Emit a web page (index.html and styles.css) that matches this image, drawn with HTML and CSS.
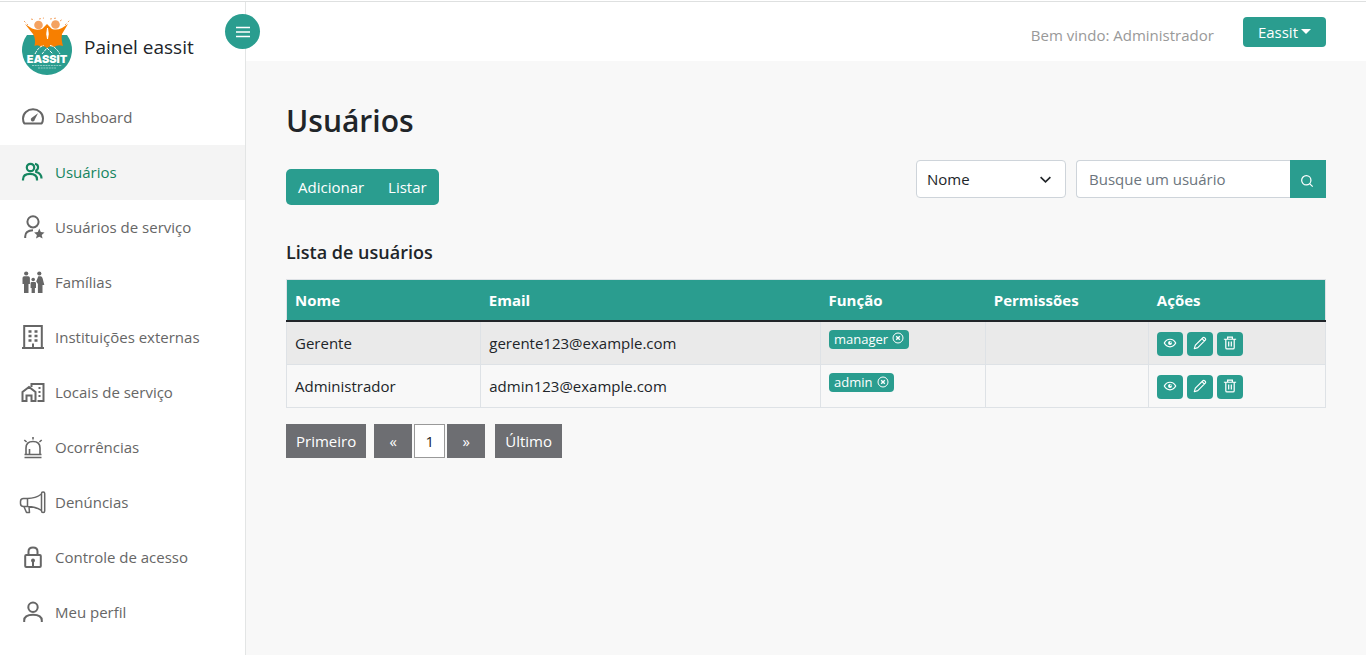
FILE: index.html
```html
<!DOCTYPE html>
<html lang="pt-BR">
<head>
<meta charset="utf-8">
<meta name="viewport" content="width=device-width, initial-scale=1">
<title>Painel eassit</title>
<link rel="stylesheet" href="styles.css">
</head>
<body>
<svg class="sprite" aria-hidden="true">
  <symbol id="eye" viewBox="0 0 16 16"><g fill="none" stroke="currentColor" stroke-width="1.4"><path d="M1.500 8C3 5 5.300 3.700 8 3.700S13 5 14.500 8C13 11 10.700 12.300 8 12.300S3 11 1.500 8Z"/></g><circle cx="8" cy="8" r="2.200" fill="currentColor"/><circle cx="8.900" cy="7.200" r=".8" fill="#2a9d8f"/></symbol>
  <symbol id="pencil" viewBox="0 0 16 16"><g fill="none" stroke="currentColor" stroke-width="1.300" stroke-linejoin="round"><path d="M1.500 14.500 2.700 10.500 11.300 2Q12.300 1 13.400 2.100L13.900 2.600Q15 3.700 14 4.700L5.500 13.300ZM10.300 3 13 5.700"/></g></symbol>
  <symbol id="trash" viewBox="0 0 16 16"><g fill="none" stroke="currentColor" stroke-width="1.400"><path d="M1 3.700H15M5.300 3.500V1.300H10.700V3.500M3.200 4V13.300Q3.200 14.700 4.600 14.700H11.400Q12.800 14.700 12.800 13.300V4M6.500 6.300V12M9.500 6.300V12"/></g></symbol>
  <symbol id="close" viewBox="0 0 12 12"><g fill="none" stroke="currentColor"><circle cx="6" cy="6" r="5"/><path d="M4.200 4.200 7.800 7.800M7.800 4.200 4.200 7.800" stroke-width="1.400"/></g></symbol>
</svg>
<div class="app">
  <aside class="sidebar">
    <div class="brand">
      <svg class="logo" viewBox="0 0 52 60" role="img" aria-label="Eassit">
        <path d="M6 18H46A25 25 0 1 1 6 18Z" fill="#2a9d8f"/>
        <path d="M4 7 11 11.500Q15 13.500 21 12L26 7 31 12Q36 13.500 41 11L47 7 41 17Q40 22 42 29Q37 27 33 30Q29 28 26 31Q23 28 20 30Q17 27 13.500 29Q15 22 12 17Z" fill="#f77f00"/>
        <circle cx="17.500" cy="8" r="4.300" fill="#f4a261"/><circle cx="34.500" cy="7.500" r="4.300" fill="#f4a261"/>
        <g fill="none" stroke="#fff" stroke-width="1"><path d="M26.500 11Q25 17 26.500 22Q28 17 26.500 11" fill="#fff"/><path d="M14 37Q18 29 23 28.500M21 37 26 31 32 37M29 28.500Q34 29 39 37" stroke-dasharray="3 1"/></g>
        <g fill="none" stroke="#f4a261" stroke-width="1" stroke-dasharray="2 2"><path d="M3 4 7 8M10 2 14 3M18 2 23 1M29 2 36 1M39 4 42 2M44 8 49 3"/></g>
        <text x="26" y="46" text-anchor="middle" class="logo-name">EASSIT</text>
        <path d="M11 48.500H41M17 51H35" stroke="#a9d7d0" stroke-width=".8" stroke-dasharray="2 .7"/>
      </svg>
      <span>Painel eassit</span>
      <button class="toggle" type="button" aria-label="Menu"><svg viewBox="0 0 14 12"><path d="M0 1.500H14M0 6H14M0 10.500H14" stroke="currentColor" stroke-width="1.500"/></svg></button>
    </div>
    <nav class="menu">
      <a href="#"><svg viewBox="0 0 24 24"><path d="M3.300 18.500Q2 16.500 2 13.500A10 9.200 0 0 1 22 13.500Q22 16.500 20.700 18.500Z" fill="none" stroke="currentColor" stroke-width="2" stroke-linejoin="round"/><path d="M17 8.300 13.800 14.400A2 2 0 1 1 10.800 12.700Z" fill="currentColor"/></svg>Dashboard</a>
      <a href="#" class="active"><svg viewBox="0 0 24 24"><g fill="none" stroke="currentColor" stroke-width="2.200"><circle cx="9.500" cy="7.500" r="3.700"/><path d="M2 20.500V19.500Q2 13.800 9 13.800T16 19.500V20.500M14 3.800Q17.500 4.500 17 8Q16.800 9.500 15.200 10.500V12Q20.500 13.500 20.500 18.500"/></g></svg>Usuários</a>
      <a href="#"><svg viewBox="0 0 24 24"><g fill="none" stroke="currentColor" stroke-width="2"><circle cx="12" cy="6.800" r="5.600"/><path d="M4.200 23V21.500Q4.200 15.500 12 15.300"/></g><path d="M18.300 13.500 19.800 17 23.500 17.400 20.700 19.900 21.600 23.600 18.300 21.700 15 23.600 15.900 19.900 13.100 17.400 16.800 17Z" fill="currentColor"/></svg>Usuários de serviço</a>
      <a href="#"><svg viewBox="0 0 24 24"><g fill="currentColor"><circle cx="5.200" cy="3.500" r="2.100"/><circle cx="18.300" cy="3.500" r="2.100"/><circle cx="12.200" cy="9.500" r="1.800"/><path d="M3.200 6.300H7.200Q8.900 6.300 8.900 8V14H7.500V23H3V14H1.500V8Q1.500 6.300 3.200 6.300ZM17.300 6.300H19.500Q21 6.300 21.500 8L23.300 15H21.500V23H16.900V14L15.200 11.500ZM10.700 12H13.700Q15 12 15 13V18H13.900V23H10.600V18H9.600V13Q9.600 12 10.700 12Z"/></g></svg>Famílias</a>
      <a href="#"><svg viewBox="0 0 24 24"><g fill="none" stroke="currentColor" stroke-width="2"><path d="M3.200 23V1H20.800V23M1 23H23M12 18.500V23"/><path d="M7.500 6.500H10.500M13.500 6.500H16.500M7.500 11H10.500M13.500 11H16.500M7.500 15.500H10.500M13.500 15.500H16.500" stroke-width="2.700"/></g></svg>Instituições externas</a>
      <a href="#"><svg viewBox="0 0 24 24"><g fill="none" stroke="currentColor" stroke-width="2"><path d="M1.500 21V12L8 7 14.500 12V21H10.500V15.500H5.500V21ZM10.500 7V4H22.500V21H16.500"/><path d="M18.500 7V9M18.500 11V13M18.500 15V17"/></g></svg>Locais de serviço</a>
      <a href="#"><svg viewBox="0 0 24 24"><g fill="none" stroke="currentColor" stroke-width="1.600"><path d="M5 19.200V13Q5 6.500 12 6.500T19 13V19.200M3.500 19.500H20.500M3.500 22.500H20.500M8.500 14V19M12 2V4.500M3.300 5 5.600 7M20.700 5 18.400 7"/></g></svg>Ocorrências</a>
      <a href="#"><svg viewBox="0 0 24 24" overflow="visible"><g fill="none" stroke="currentColor" stroke-width="1.500" stroke-linejoin="round"><rect x="20.500" y="2" width="3.200" height="20.500" rx="1.500"/><path d="M20.500 4Q14.500 8.500 6.500 8.500H2.500Q-.5 8.500-.5 11.500V13.500Q-.5 16.500 2.500 16.500H6.500Q14.500 16.500 20.500 20.500M6.500 8.500V16.500M3 16.700 5.500 22.500H8.500L8 17"/></g></svg>Denúncias</a>
      <a href="#"><svg viewBox="0 0 24 24"><g fill="none" stroke="currentColor" stroke-width="2"><rect x="4.200" y="10" width="15.600" height="12" rx="1"/><path d="M7.500 10V6.500Q7.500 2.500 12 2.500T16.500 6.500V10M12 16V21"/></g><circle cx="12" cy="15.500" r="2" fill="currentColor"/></svg>Controle de acesso</a>
      <a href="#"><svg viewBox="0 0 24 24"><g fill="none" stroke="currentColor" stroke-width="2"><circle cx="12" cy="7.200" r="4.700"/><path d="M3.200 22V20.500Q3.200 14.800 12 14.800T20.800 20.500V22"/></g></svg>Meu perfil</a>
    </nav>
  </aside>
  <div class="page">
    <header class="topbar">
      <span class="welcome">Bem vindo: Administrador</span>
      <button class="account" type="button">Eassit<span class="caret"></span></button>
    </header>
    <main class="content">
      <h1>Usuários</h1>
      <div class="toolbar">
        <div class="actions"><button type="button">Adicionar</button><button type="button">Listar</button></div>
        <form class="search">
          <div class="select-box">
            <select aria-label="Filtrar por"><option>Nome</option><option>Email</option></select>
            <svg viewBox="0 0 16 16"><path d="M2 5 8 11 14 5" fill="none" stroke="currentColor" stroke-width="2"/></svg>
          </div>
          <div class="search-box">
            <input type="text" placeholder="Busque um usuário" aria-label="Busque um usuário">
            <button type="button" aria-label="Buscar"><svg viewBox="0 0 16 16"><g fill="none" stroke="currentColor" stroke-width="1.400"><circle cx="7.200" cy="7.200" r="5.300"/><path d="M11 11 14.500 14.500"/></g></svg></button>
          </div>
        </form>
      </div>
      <h2>Lista de usuários</h2>
      <table class="users">
        <colgroup><col class="c-name"><col class="c-mail"><col class="c-role"><col class="c-perm"><col class="c-act"></colgroup>
        <thead><tr><th>Nome</th><th>Email</th><th>Função</th><th>Permissões</th><th>Ações</th></tr></thead>
        <tbody>
          <tr>
            <td>Gerente</td><td>gerente123@example.com</td>
            <td class="role"><button class="tag" type="button">manager<svg><use href="#close"/></svg></button></td><td></td>
            <td class="ops"><div><button type="button" aria-label="Ver"><svg><use href="#eye"/></svg></button><button type="button" aria-label="Editar"><svg><use href="#pencil"/></svg></button><button type="button" aria-label="Excluir"><svg><use href="#trash"/></svg></button></div></td>
          </tr>
          <tr>
            <td>Administrador</td><td>admin123@example.com</td>
            <td class="role"><button class="tag" type="button">admin<svg><use href="#close"/></svg></button></td><td></td>
            <td class="ops"><div><button type="button" aria-label="Ver"><svg><use href="#eye"/></svg></button><button type="button" aria-label="Editar"><svg><use href="#pencil"/></svg></button><button type="button" aria-label="Excluir"><svg><use href="#trash"/></svg></button></div></td>
          </tr>
        </tbody>
      </table>
      <nav class="pager" aria-label="Paginação">
        <button type="button">Primeiro</button>
        <div><button class="step" type="button">«</button><button class="current" type="button">1</button><button class="step" type="button">»</button></div>
        <button type="button">Último</button>
      </nav>
    </main>
  </div>
</div>
</body>
</html>
```
FILE: styles.css
```css
* { box-sizing: border-box; }
body {
  margin: 0;
  font: 15px/24px "Segoe UI", "Open Sans", "Noto Sans", sans-serif;
  color: #212529;
  background: #f8f8f8;
  border-top: 1px solid #fff;
}
button, input, select { font: inherit; margin: 0; }
button { border: 0; color: #fff; background: #2a9d8f; padding: 0; cursor: pointer; }
svg { display: block; flex: none; }
.sprite { display: none; }
.app { display: flex; min-height: calc(100vh - 1px); border-top: 1px solid #dee0e0; }

.sidebar { flex: 0 0 246px; background: #fff; border-right: 1px solid #e3e5e5; }
.brand { position: relative; display: flex; align-items: center; gap: 11px; height: 88px; padding: 2px 0 0 21px; font-size: 19px; }
.logo { width: 52px; height: 60px; }
.logo-name { font: 900 11px "Inter", sans-serif; fill: #fff; }
.toggle { position: absolute; top: 12px; right: -15px; width: 35px; height: 35px; border-radius: 50%; display: grid; place-items: center; }
.toggle svg { width: 14px; height: 12px; }
.menu a { display: flex; align-items: center; gap: 10px; height: 55px; padding: 0 0 2px 21px; color: #666; text-decoration: none; }
.menu svg { width: 24px; height: 24px; }
.menu .active { background: #f4f4f4; color: #158560; }

.page { flex: 1; min-width: 0; }
.topbar { display: flex; justify-content: flex-end; align-items: center; gap: 29px; height: 59px; padding-right: 40px; background: #fff; }
.welcome { color: #999; padding-top: 7px; }
.account { display: flex; align-items: center; justify-content: center; gap: 3px; height: 30px; padding: 0 15px; border-radius: 4px; }
.caret { border: 5px solid transparent; border-top-color: #fff; border-bottom: 0; }

.content { padding: 41px 40px; }
h1 { margin: 0 0 20px; font-size: 30px; line-height: 38px; font-weight: 600; }
.toolbar { display: flex; justify-content: space-between; align-items: flex-end; height: 45px; margin-bottom: 35px; }
.actions { display: flex; border-radius: 5px; background: #2a9d8f; }
.actions button { height: 36px; padding: 0 12px; background: none; }
.search { display: flex; gap: 10px; align-self: flex-start; }
.select-box { display: grid; width: 150px; }
.select-box > * { grid-area: 1 / 1; }
select { appearance: none; width: 100%; height: 38px; padding: 0 10px; border: 1px solid #ced4da; border-radius: 4px; background: #fff; color: #212529; }
.select-box svg { width: 13px; height: 13px; align-self: center; justify-self: end; margin-right: 14px; pointer-events: none; }
.search-box { display: flex; width: 250px; }
input { flex: 1; min-width: 0; height: 38px; padding: 0 12px; border: 1px solid #ced4da; border-right: 0; border-radius: 4px 0 0 4px; background: #fff; }
input::placeholder { color: #6c757d; opacity: 1; }
.search-box button { width: 36px; display: grid; place-items: center; padding: 3px 2px 0 0; }
.search-box svg { width: 14px; height: 14px; }
h2 { margin: 0 0 15px; font-size: 18px; line-height: 24px; font-weight: 600; }

.users { width: 100%; table-layout: fixed; border-collapse: collapse; border: 1px solid #dee2e6; }
.c-name { width: 18.7%; }
.c-mail { width: 32.7%; }
.c-role { width: 15.9%; }
.c-perm { width: 15.7%; }
.c-act { width: 17%; }
.users th { height: 41px; padding: 0 8px; text-align: left; font-weight: 700; color: #fff; background: #2a9d8f; border-bottom: 2px solid #212529; }
.users td { height: 43px; padding: 0 8px; border: 1px solid #dee2e6; }
.users tbody tr:first-child { background: #eaeaea; }
.users tbody tr:first-child td { height: 44px; }
.users .role { vertical-align: top; padding-top: 8px; }
.tag { display: flex; gap: 4px; height: 19px; padding: 0 5px; align-items: center; border-radius: 4px; font-size: 13px; line-height: 19px; }
.tag svg { width: 12px; height: 12px; margin-bottom: 2px; }
.ops div { display: flex; gap: 4px; padding-top: 2px; }
.ops button { width: 26px; height: 24px; border-radius: 4px; display: grid; place-items: center; padding-bottom: 2px; }
.ops svg { width: 14px; height: 14px; }

.pager { display: flex; margin-top: 16px; gap: 8px; }
.pager div { display: flex; gap: 2px; margin-right: 2px; }
.pager button { height: 34px; padding: 0 10px; background: #6d6e72; }
.pager .step { width: 38px; }
.pager .current { width: 31px; padding: 0; color: #212529; background: #fff; border: 1px solid #999; }
```
